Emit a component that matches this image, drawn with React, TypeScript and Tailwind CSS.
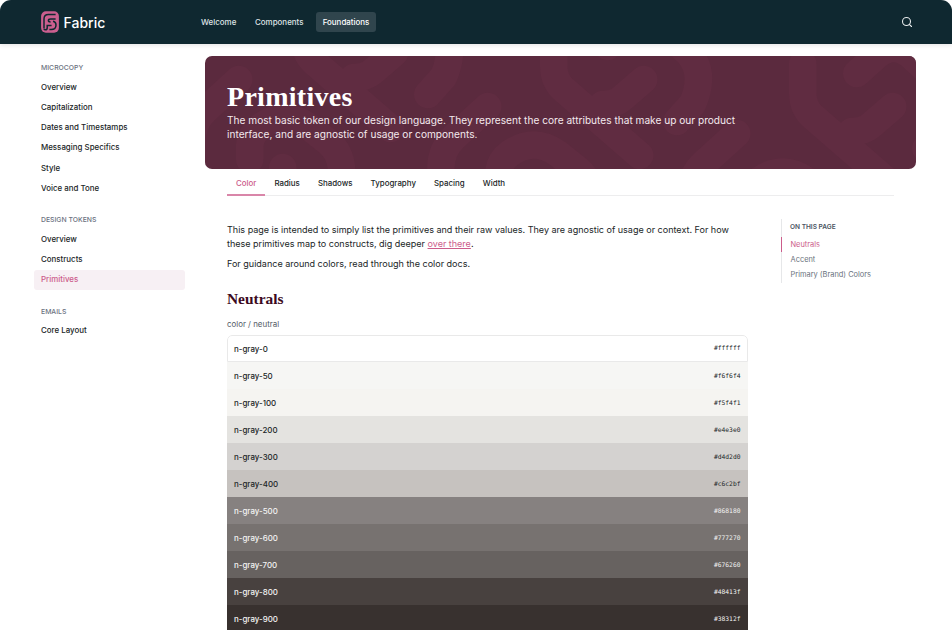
import { Search } from "lucide-react";

const SANS = "font-['Inter','Liberation_Sans',sans-serif]";
const SERIF = "font-['Liberation_Serif',serif]";

const sections = [
  {
    title: "MICROCOPY",
    items: ["Overview", "Capitalization", "Dates and Timestamps", "Messaging Specifics", "Style", "Voice and Tone"],
  },
  { title: "DESIGN TOKENS", items: ["Overview", "Constructs", "Primitives"] },
  { title: "EMAILS", items: ["Core Layout"] },
];

const swatches = [
  { name: "n-gray-0", hex: "#ffffff", dark: false },
  { name: "n-gray-50", hex: "#f6f6f4", dark: false },
  { name: "n-gray-100", hex: "#f5f4f1", dark: false },
  { name: "n-gray-200", hex: "#e4e3e0", dark: false },
  { name: "n-gray-300", hex: "#d4d2d0", dark: false },
  { name: "n-gray-400", hex: "#c6c2bf", dark: false },
  { name: "n-gray-500", hex: "#868180", dark: true },
  { name: "n-gray-600", hex: "#777270", dark: true },
  { name: "n-gray-700", hex: "#676260", dark: true },
  { name: "n-gray-800", hex: "#48413f", dark: true },
  { name: "n-gray-900", hex: "#38312f", dark: true },
];

const tabs = ["Color", "Radius", "Shadows", "Typography", "Spacing", "Width"];

function Logo() {
  return (
    <svg className="h-[22px] w-[18px]" viewBox="0 0 18 22" fill="none">
      <rect x="0.1" y="0.3" width="17.8" height="21.4" rx="4.8" fill="#cb5f8f" />
      <path
        d="M3 17.6V8Q3 3.6 7.4 3.6H14.6M14.6 7.9H9.6Q7.4 7.9 7.4 9.4T9.6 10.9M3 17.8Q3.2 18.8 4.4 18.8Q6.2 18.8 6.2 17V14.4H10.6M8.4 18.6H10.2Q15 18.6 15 14Q15 10.6 12 10.2"
        stroke="#0f2830"
        strokeWidth="1.5"
      />
    </svg>
  );
}

function Weave() {
  return (
    <g>
      <path d="M554 36V66Q554 80 564 89L640 155M603 104Q615 104 622 98L644 79" />
      <path d="M488 106L454 137Q441 149 441 170V190" />
      <path d="M608 46L628 28Q645 14 662 28L689 53Q706 72 693 103L677 121" />
      <path d="M499 186V172Q500 160 510 153Q534 136 558 153L578 169Q591 180 591 200" />
      <path d="M532 194V220" />
    </g>
  );
}

function Hero() {
  return (
    <div className="relative -ml-[0.5px] h-[113px] overflow-hidden rounded-[7px] bg-[#5b2a3e]">
      <svg
        className="absolute inset-0 h-full w-full"
        viewBox="205.5 55.5 710 113"
        fill="none"
        stroke="#602c41"
        strokeWidth="27.5"
        strokeLinecap="round"
        strokeLinejoin="round"
      >
        <Weave />
        <g transform="translate(249 27)"><Weave /></g>
        <g transform="translate(-249 -27)"><Weave /></g>
      </svg>
      <div className="relative px-[22px] pt-[25px] text-white">
        <h1 className={`${SERIF} text-[28px] leading-[32px] font-bold tracking-[0.01em]`}>Primitives</h1>
        <p className="mt-[0.5px] text-[10.15px] leading-[14px] whitespace-nowrap text-[#f3e8ed]">
          The most basic token of our design language. They represent the core attributes that make up our product
          <br />
          interface, and are agnostic of usage or components.
        </p>
      </div>
    </div>
  );
}

export default function App() {
  return (
    <div className={`${SANS} h-[630px] w-[952px] overflow-hidden rounded-[11px] bg-white text-[#202526]`}>
      <header className="flex h-[44px] items-center bg-[#0f2830] pr-[39.5px] pl-[41px] shadow-[0_1px_5px_rgba(0,0,0,0.12)]">
        <Logo />
        <span className="ml-[4.5px] w-[131px] text-[14px] font-medium text-white">Fabric</span>
        <nav className="flex flex-1 items-center text-[7.95px] font-medium text-[#dfe4e6]">
          <span className="w-[60.5px] pt-[1.5px] pl-[6.5px]">Welcome</span>
          <span className="w-[61px] pt-[1.5px]">Components</span>
          <span className="flex h-[20px] w-[60px] items-center justify-center rounded-[3px] bg-[#30454d] pt-[1.5px] text-white">Foundations</span>
        </nav>
        <Search className="size-[12px] text-[#e6eaeb]" strokeWidth={2.2} />
      </header>
      <div className="flex">
        <aside className="w-[205.5px] pt-[14.3px] pl-[34px]">
          {sections.map((s) => (
            <section key={s.title} className="mb-[12.25px]">
              <h2 className="flex h-[18.5px] items-center pt-[1px] pl-[7px] text-[6.85px] font-medium text-[#6b7280]">{s.title}</h2>
              {s.items.map((item) => (
                <div
                  key={item}
                  className={`flex h-[20.25px] items-center rounded-[3px] pt-[1.2px] pl-[7px] text-[7.92px] font-medium ${item === "Primitives" ? "w-[151px] bg-[#f7f0f4] text-[#cc5c8b]" : ""}`}
                >
                  {item}
                </div>
              ))}
            </section>
          ))}
        </aside>
        <main className="w-[710px] pt-[11.5px]">
          <Hero />
          <nav className="mx-[21.5px] flex h-[27.5px] border-b border-[#ededee] text-[7.92px] font-medium">
            {tabs.map((t) => (
              <span
                key={t}
                className={`flex h-[27.5px] items-center border-b-2 px-[9px] pt-[5px] ${t === "Color" ? "border-[#d986a9] text-[#cc5c8b]" : "border-transparent"}`}
              >
                {t}
              </span>
            ))}
          </nav>
          <div className="flex pl-[21.5px]">
            <article className="w-[520.5px] pt-[27px]">
              <p className="text-[9.02px] leading-[13.5px] whitespace-nowrap">
                This page is intended to simply list the primitives and their raw values. They are agnostic of usage or context. For how
                <br />
                these primitives map to constructs, dig deeper <a className="text-[#cc5c8b] underline">over there</a>.
              </p>
              <p className="mt-[6.5px] text-[9.02px] leading-[13.5px]">For guidance around colors, read through the color docs.</p>
              <h2 className={`${SERIF} mt-[19px] text-[15.4px] leading-[20px] font-bold text-[#3c0a1e]`}>Neutrals</h2>
              <p className="mt-[9px] text-[7.92px] leading-[12px] text-[#525b66]">color / neutral</p>
              <div className="mt-[4.7px] overflow-hidden rounded-t-[5px]">
                {swatches.map((s, i) => (
                  <div
                    key={s.name}
                    className={`flex h-[27.05px] items-center justify-between text-[7.95px] font-medium ${i === 0 ? "rounded-t-[5px] border border-[#e9e9e9] px-[6px]" : "px-[7px]"} ${s.dark ? "text-[#f4f4f3]" : ""}`}
                    style={{ backgroundColor: s.hex }}
                  >
                    <span className="pt-[2.6px]">{s.name}</span>
                    <span className="font-['DejaVu_Sans_Mono',monospace] text-[6.3px] font-normal">{s.hex}</span>
                  </div>
                ))}
              </div>
            </article>
            <aside className="mt-[22.5px] ml-[33.5px] h-[64px] border-l border-l-[#e6e7e9] text-[7.45px] text-[#6a727d]">
              <h3 className="flex h-[18px] items-center pl-[8px] text-[6.55px] font-semibold text-[#4b5563]">ON THIS PAGE</h3>
              <div className="-ml-px flex h-[15.2px] items-center border-l border-l-[#cc5c8b] pl-[8.5px] text-[#cc5c8b]">Neutrals</div>
              <div className="flex h-[15.2px] items-center pl-[8.5px]">Accent</div>
              <div className="flex h-[15.2px] items-center pl-[8.5px]">Primary (Brand) Colors</div>
            </aside>
          </div>
        </main>
      </div>
    </div>
  );
}
